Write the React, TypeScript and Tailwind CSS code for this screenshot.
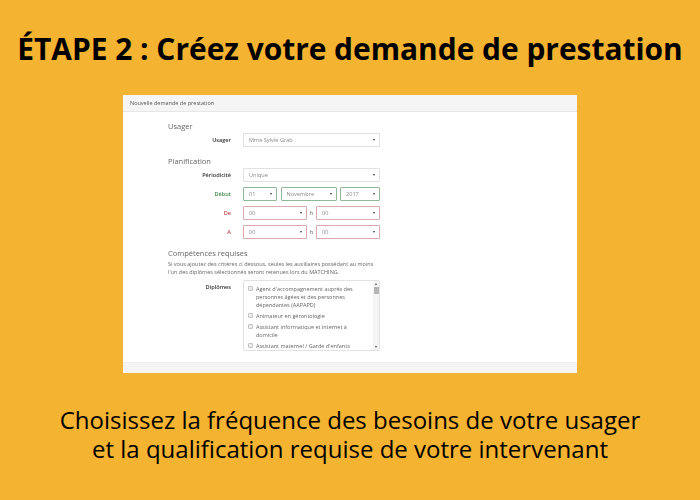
const Caret = () => <span className="ml-auto h-0 w-0 border-x-[1.5px] border-t-[2px] border-x-transparent border-t-[#333]" />

function Select({ value, width, tone = "plain" }: { value: string; width: string; tone?: "plain" | "ok" | "bad" }) {
  const border = tone === "ok" ? "border-[#8fb894]" : tone === "bad" ? "border-[#dba8ae]" : "border-[#e2e2e2]"
  return (
    <div className={`flex h-[14px] items-center rounded-[1px] border bg-white pl-[5px] pr-1 text-[5.6px] text-[#8a8a8a] ${border} ${width}`}>
      {value}
      <Caret />
    </div>
  )
}

function Row({ label, color, children, className }: { label: string; color: string; children: React.ReactNode; className: string }) {
  return (
    <div className={`flex items-center ${className}`}>
      <div className={`w-[63px] text-right text-[5.6px] font-semibold ${color}`}>{label}</div>
      <div className="ml-3 flex items-center">{children}</div>
    </div>
  )
}

const diplomes = [
  "Agent d'accompagnement auprès des personnes âgées et des personnes dépendantes (AAPAPD)",
  "Animateur en gérontologie",
  "Assistant informatique et internet à domicile",
  "Assistant maternel / Garde d'enfants",
]

export default function App() {
  return (
    <div className="flex h-[500px] w-[700px] flex-col items-center overflow-hidden bg-[#f4b331] font-['Open_Sans',sans-serif] text-black">
      <h1 className="mt-[27px] h-[44px] text-center text-[29.9px] leading-[44px] font-bold whitespace-nowrap">ÉTAPE 2 : Créez votre demande de prestation</h1>

      <div className="mt-[24px] flex h-[278px] w-[454px] flex-col bg-white blur-[0.4px]">
        <div className="flex h-[17px] shrink-0 items-center border-b border-[#e6e6e6] bg-[#f5f5f5] pl-[7px] text-[5.5px] text-[#555]">Nouvelle demande de prestation</div>

        <div className="flex-1 pl-[45px] text-[#666]">
          <div className="mt-[9px] text-[7.5px] leading-[10px]">Usager</div>
          <Row label="Usager" color="text-[#333]" className="mt-[2px]">
            <Select value="Mme Sylvie Grab" width="w-[137px]" />
          </Row>

          <div className="mt-[9px] text-[7.5px] leading-[10px]">Planification</div>
          <Row label="Périodicité" color="text-[#333]" className="mt-[2px]">
            <Select value="Unique" width="w-[137px]" />
          </Row>
          <Row label="Début" color="text-[#3f8a4a]" className="mt-[5px]">
            <Select value="01" width="w-[34px]" tone="ok" />
            <Select value="Novembre" width="w-[56px] ml-[3.5px]" tone="ok" />
            <Select value="2017" width="w-[40px] ml-[3.5px]" tone="ok" />
          </Row>
          <Row label="De" color="text-[#c04a50]" className="mt-[5px]">
            <Select value="00" width="w-[64px]" tone="bad" />
            <span className="w-[9px] text-center text-[6px]">h</span>
            <Select value="00" width="w-[64px]" tone="bad" />
          </Row>
          <Row label="A" color="text-[#c04a50]" className="mt-[5px]">
            <Select value="00" width="w-[64px]" tone="bad" />
            <span className="w-[9px] text-center text-[6px]">h</span>
            <Select value="00" width="w-[64px]" tone="bad" />
          </Row>

          <div className="mt-[9px] text-[7.5px] leading-[10px]">Compétences requises</div>
          <p className="mt-[2px] w-[215px] text-[5.5px] leading-[8px]">
            Si vous ajoutez des critères ci dessous, seules les auxiliaires possédant au moins l'un des diplômes sélectionnés seront retenues lors du MATCHING.
          </p>

          <div className="mt-[4px] flex items-start">
            <div className="mt-[3px] w-[63px] text-right text-[5.6px] font-semibold text-[#333]">Diplômes</div>
            <div className="ml-3 flex h-[71px] w-[137px] overflow-hidden rounded-[2px] border border-[#e2e2e2] pl-[4px]">
              <div className="flex-1 pt-[4px]">
                {diplomes.map((d) => (
                  <div key={d} className="mb-[3px] flex items-start text-[5.5px] leading-[8px]">
                    <span className="mt-[1px] h-[5px] w-[5px] shrink-0 rounded-[1px] border border-[#c4c4c4] bg-[#ececec]" />
                    <span className="ml-[3px] w-[100px]">{d}</span>
                  </div>
                ))}
              </div>
              <div className="flex w-[6px] shrink-0 flex-col items-center bg-[#f5f5f5] py-[2px]">
                <span className="h-0 w-0 border-x-[1.5px] border-b-[2px] border-x-transparent border-b-[#444]" />
                <span className="mt-[2px] h-[7px] w-[5px] bg-[#b5b5b5]" />
                <span className="mt-auto h-0 w-0 border-x-[1.5px] border-t-[2px] border-x-transparent border-t-[#444]" />
              </div>
            </div>
          </div>
        </div>

        <div className="h-[11px] shrink-0 border-t border-[#eee] bg-[#f5f5f5]" />
      </div>

      <p className="mt-[32px] text-center text-[24px] leading-[29px] whitespace-nowrap">
        Choisissez la fréquence des besoins de votre usager
        <br />
        et la qualification requise de votre intervenant
      </p>
    </div>
  )
}
